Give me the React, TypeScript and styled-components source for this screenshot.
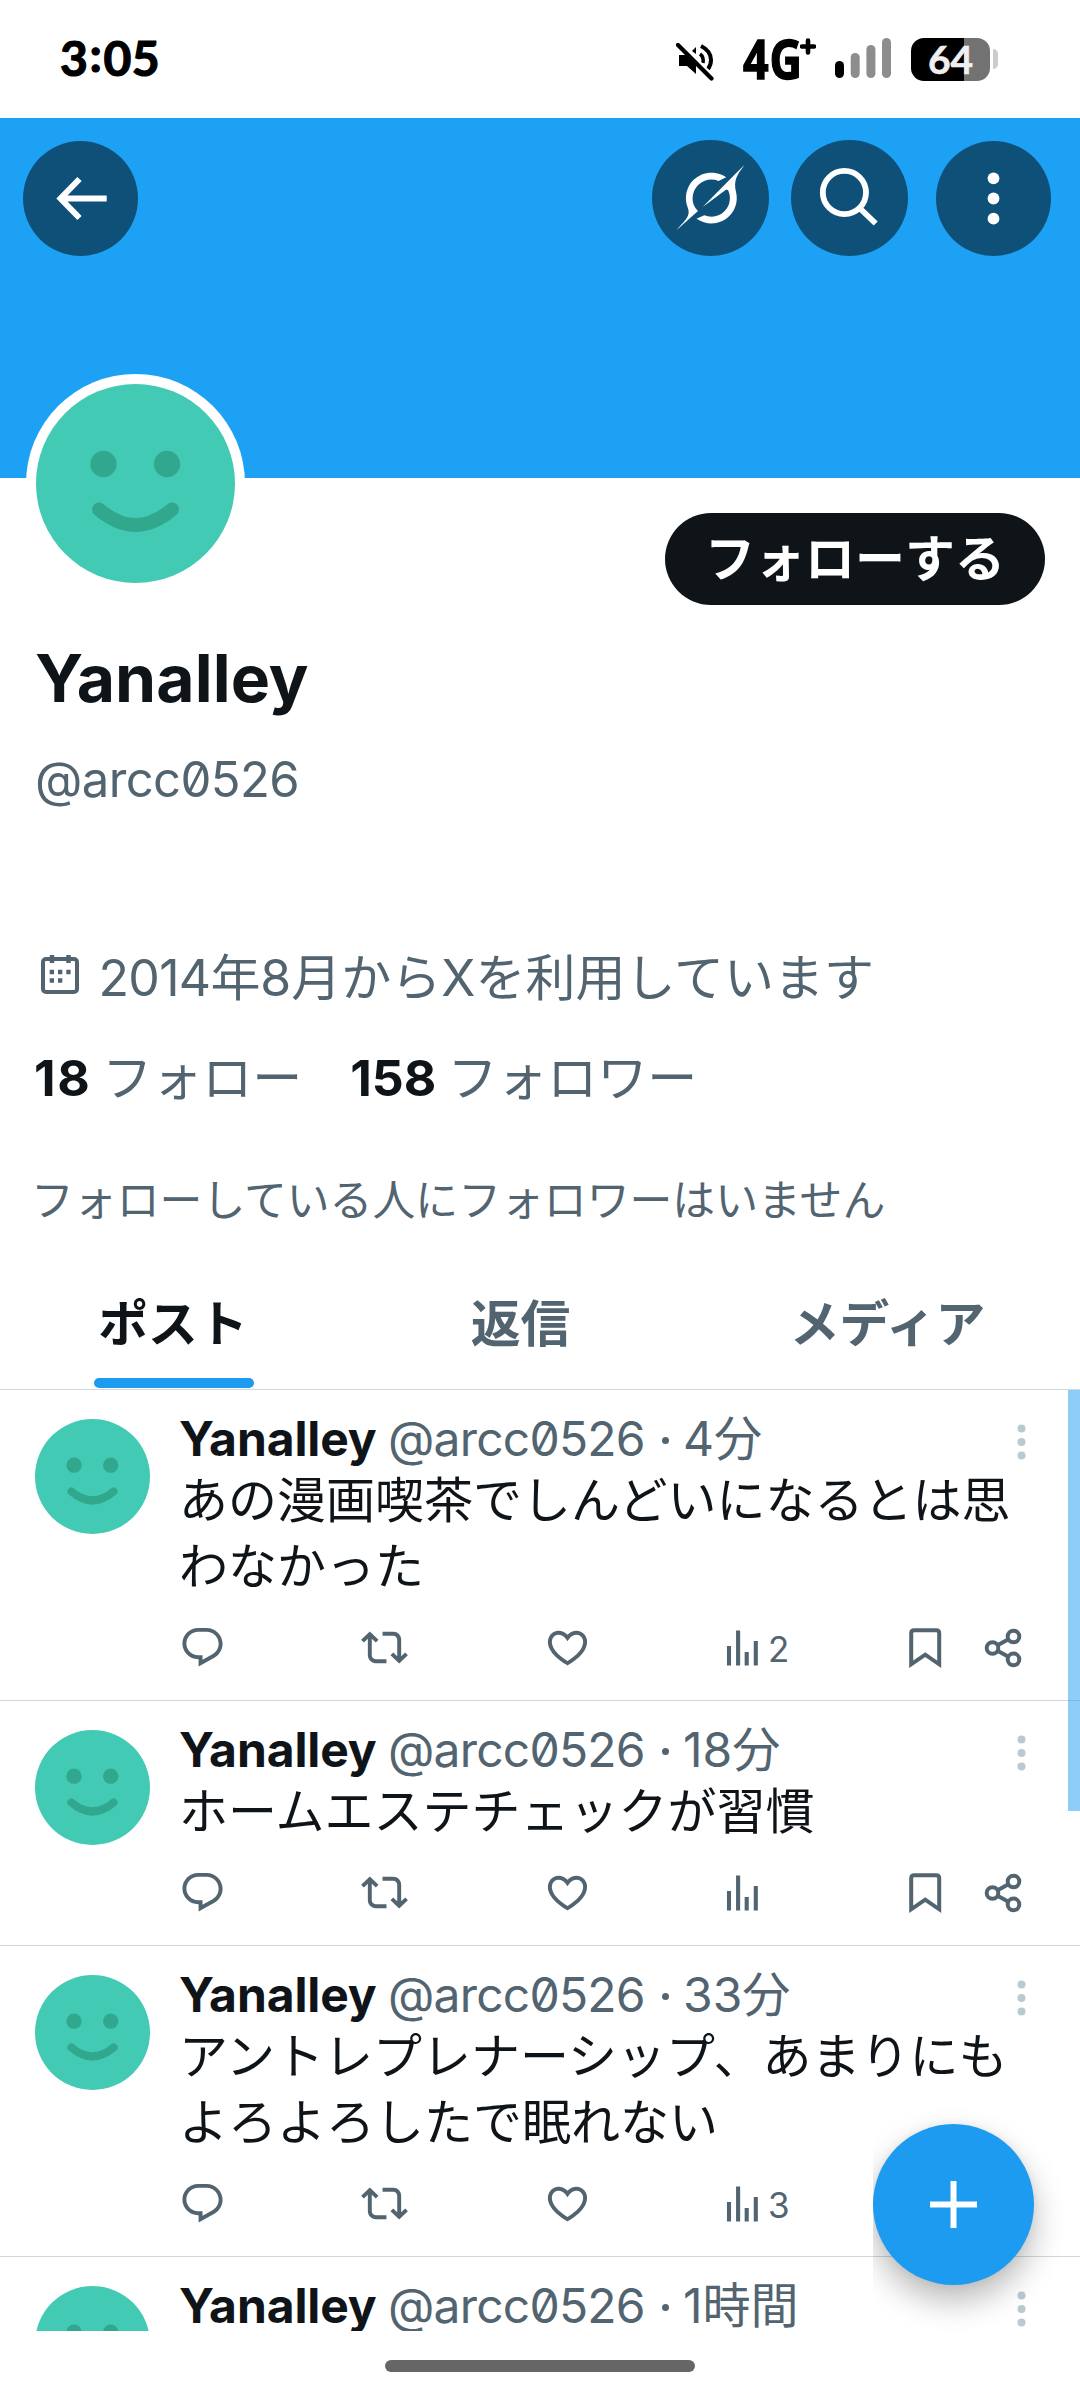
import React from "react";
import styled, { createGlobalStyle } from "styled-components";

const ink = "#0f1419";
const slate = "#536471";
const blue = "#1d9bf0";
const line = "#cfd9de";

const GlobalStyle = createGlobalStyle`
  * { box-sizing: border-box; }
  body {
    margin: 0;
    background: #fff;
    color: ${ink};
    font-family: Inter, "Noto Sans CJK JP", sans-serif;
    font-size: 49px;
  }
`;

const Screen = styled.div`
  position: relative;
  width: 1080px;
  height: 2400px;
  display: flex;
  flex-direction: column;
  overflow: hidden;
  background: #fff;
  white-space: nowrap;
`;

/* Status bar */
const StatusBar = styled.header`
  flex: none;
  height: 118px;
  padding: 0 82px 2px 60px;
  display: flex;
  align-items: center;
  color: #000;
  font-family: Lato, sans-serif;
`;
const Clock = styled.div`
  flex: 1;
  display: flex;
  font-size: 48px;
  font-weight: 700;
  line-height: 60px;
  letter-spacing: 0.6px;
  -webkit-text-stroke: 1.2px #000;
`;
const Colon = styled.span`
  margin: -4px 1px 4px;
`;
const Network = styled.div`
  width: 75px;
  margin: 0 17px 0 29px;
  display: flex;
  align-items: center;
  font-family: "Open Sans", sans-serif;
  font-weight: 700;
  font-size: 54px;
  line-height: 60px;
`;
const Generation = styled.span`
  width: 57px;
  transform: scaleX(0.83);
  transform-origin: left;
  letter-spacing: 1px;
  -webkit-text-stroke: 1.4px #000;
`;
const Battery = styled.div`
  width: 79px;
  height: 43px;
  margin: 2px 3px 0 20px;
  border-radius: 13px;
  display: flex;
  align-items: center;
  justify-content: center;
  background: linear-gradient(to right, #000 53px, #727272 53px);
  color: #efefef;
  font-size: 39px;
  font-weight: 700;
  line-height: 43px;
  -webkit-text-stroke: 0.6px #efefef;
`;
const BatteryTip = styled.div`
  width: 5px;
  height: 20px;
  margin-top: 2px;
  border-radius: 0 6px 6px 0;
  background: #ccc;
`;

/* Banner */
const Banner = styled.div`
  flex: none;
  height: 360px;
  padding: 22px 29px 0 23px;
  display: flex;
  align-items: flex-start;
  background: #1da1f5;
`;
const RoundButton = styled.button<{ $size: number; $gap?: number }>`
  width: ${(p) => p.$size}px;
  height: ${(p) => (p.$size === 115 ? 115 : 116)}px;
  margin: ${(p) => (p.$size === 115 ? 1 : 0)}px 0 0 ${(p) => p.$gap ?? 0}px;
  padding: 0;
  border: 0;
  border-radius: 50%;
  background: #0f5079;
  svg { display: block; }
`;
const Spacer = styled.div`
  flex: 1;
`;

/* Profile */
const ProfileTop = styled.div`
  flex: none;
  height: 150px;
  padding: 35px 35px 0 26px;
  display: flex;
  justify-content: space-between;
  align-items: flex-start;
`;
const AvatarRing = styled.div`
  width: 219px;
  height: 219px;
  margin-top: -139px;
  padding: 10px;
  border-radius: 50%;
  background: #fff;
`;
const FollowButton = styled.button`
  width: 380px;
  height: 92px;
  padding: 0;
  border: 0;
  border-radius: 46px;
  background: ${ink};
  color: #fff;
  font: 700 50px/92px Inter, "Noto Sans CJK JP", sans-serif;
`;
const DisplayName = styled.h1`
  flex: none;
  height: 100px;
  margin: 0;
  padding-left: 35px;
  font-size: 66px;
  font-weight: 700;
  line-height: 101px;
  letter-spacing: 0.1px;
`;
const Handle = styled.div`
  flex: none;
  height: 200px;
  padding-left: 35px;
  color: ${slate};
  font-size: 49px;
  line-height: 103px;
  letter-spacing: -0.6px;
  font-feature-settings: "zero";
`;
const Joined = styled.div`
  flex: none;
  height: 100px;
  padding-left: 37px;
  display: flex;
  align-items: center;
  color: ${slate};
  font-size: 50px;
  line-height: 100px;
  svg { margin: -8px 13.5px 0 0; }
`;
const Year = styled.span`
  letter-spacing: -0.7px;
`;
const Counts = styled.div`
  flex: none;
  height: 100px;
  padding-left: 34px;
  display: flex;
  gap: 48px;
  color: ${slate};
  font-size: 50px;
  line-height: 100px;
`;
const Count = styled.div<{ $tracking: number }>`
  display: flex;
  gap: 11px;
  b {
    color: ${ink};
    font-weight: 700;
    letter-spacing: ${(p) => p.$tracking}px;
  }
`;
const Mutuals = styled.div`
  flex: none;
  height: 96px;
  margin-top: 32px;
  padding-left: 31px;
  color: ${slate};
  font-size: 42.85px;
  line-height: 81px;
`;

/* Tabs */
const Tabs = styled.nav`
  flex: none;
  height: 134px;
  display: grid;
  grid-template-columns: 346px 349px 385px;
  border-bottom: 1px solid ${line};
`;
const Tab = styled.div<{ $active?: boolean }>`
  position: relative;
  height: 133px;
  text-align: center;
  font-size: 49.8px;
  font-weight: 700;
  line-height: 137px;
  color: ${(p) => (p.$active ? ink : slate)};
  &::after {
    content: "";
    display: ${(p) => (p.$active ? "block" : "none")};
    position: absolute;
    left: 94px;
    bottom: 1px;
    width: 160px;
    height: 10px;
    border-radius: 5px;
    background: ${blue};
  }
`;

/* Feed */
const Feed = styled.main`
  position: relative;
  flex: none;
  height: 941px;
  overflow: hidden;
`;
const ScrollThumb = styled.div`
  position: absolute;
  top: 0;
  right: 0;
  width: 12px;
  height: 421px;
  background: rgba(29, 155, 240, 0.5);
`;
const PostRow = styled.article`
  display: flex;
  padding: 20px 0 28px 35px;
  border-bottom: 1px solid ${line};
`;
const PostAvatar = styled.div`
  flex: none;
  width: 115px;
  height: 115px;
  margin: 9px 29px 0 0;
`;
const PostMain = styled.div`
  flex: 1;
  min-width: 0;
`;
const PostHead = styled.div`
  display: flex;
  height: 58px;
  padding-right: 54px;
  font-size: 48px;
  line-height: 57px;
  color: ${slate};
`;
const Author = styled.b`
  width: 209px;
  color: ${ink};
  font-weight: 700;
  letter-spacing: -0.1px;
`;
const PostHandle = styled.span`
  width: 269px;
  letter-spacing: -0.8px;
  font-feature-settings: "zero";
`;
const Dot = styled.span`
  width: 7px;
  height: 7px;
  margin: 27px 14px 0 5px;
  border-radius: 50%;
  background: ${slate};
`;
const When = styled.span`
  flex: 1;
`;
const Body = styled.p`
  margin: 0;
  font-size: 49px;
  line-height: 66px;
  white-space: pre-line;
`;
const Actions = styled.div`
  height: 72px;
  padding: 24px 0 0;
  display: grid;
  grid-template-columns: 182px 183px 181px 180px 76px 47px;
  color: ${slate};
  svg { display: block; flex: none; }
`;
const Action = styled.div`
  display: flex;
  font-size: 35px;
  line-height: 51px;
`;

const Fab = styled.button`
  position: absolute;
  left: 873px;
  top: 2124px;
  width: 161px;
  height: 161px;
  padding: 0;
  border: 0;
  border-radius: 50%;
  background: ${blue};
  box-shadow: 0 16px 32px rgba(0, 0, 0, 0.27), 0 0 10px rgba(0, 0, 0, 0.06);
  clip-path: inset(-60px -46px -46px 0);
  svg { display: block; }
`;
const NavBar = styled.footer`
  flex: 1;
  display: flex;
  justify-content: center;
  padding-top: 29px;
`;
const HomeIndicator = styled.div`
  width: 310px;
  height: 12px;
  border-radius: 6px;
  background: #666;
`;

const FaceSvg = styled.svg`
  display: block;
  width: 100%;
  height: 100%;
`;
const Face = () => (
  <FaceSvg viewBox="0 0 199 199">
    <circle cx="99.5" cy="99.5" r="99.5" fill="#43cab4" />
    <circle cx="67.5" cy="80" r="13.2" fill="#31a88e" />
    <circle cx="131" cy="80" r="13.2" fill="#31a88e" />
    <path d="M63 125.500Q99.500 156.500 136 125.500" fill="none" stroke="#31a88e" strokeWidth="14" strokeLinecap="round" />
  </FaceSvg>
);

const MuteSvg = styled.svg`
  margin-top: 8px;
`;
const MutedIcon = () => (
  <MuteSvg width="38" height="38" viewBox="0 0 38 38">
    <path d="M16 8l4-4v7z" fill="#000" />
    <path d="M24 11q4 3 3 9" fill="none" stroke="#000" strokeWidth="3.500" />
    <path d="M25 3q10 5 10 14 0 5-3 9" fill="none" stroke="#000" strokeWidth="4" />
    <path d="M4 0l34 34" stroke="#fff" strokeWidth="3" />
    <path d="M3 12h8v11H3zM10 12l10 10v9l-9-8z" fill="#000" />
    <path d="M2 2l33.500 33.500" stroke="#000" strokeWidth="4.200" strokeLinecap="round" />
  </MuteSvg>
);
const PlusSign = () => (
  <svg width="16" height="40" viewBox="0 0 16 40">
    <path d="M8 2.500v12M2 8.500h12" stroke="#000" strokeWidth="4.600" strokeLinecap="round" />
  </svg>
);
const SignalIcon = () => (
  <svg width="56" height="40" viewBox="0 0 56 40">
    <rect x="0" y="23" width="9" height="17" rx="4.500" fill="#000" />
    <rect x="15.700" y="15" width="9" height="25" rx="4.500" fill="#8d8d8d" />
    <rect x="31.400" y="7" width="9" height="33" rx="4.500" fill="#8d8d8d" />
    <rect x="47" y="0" width="9" height="40" rx="4.500" fill="#8d8d8d" />
  </svg>
);
const BackIcon = () => (
  <svg width="115" height="115" fill="none" stroke="#fff" strokeWidth="6">
    <path d="M36 57.500H83.700M56.500 38 37.500 57.500 56.500 77" />
  </svg>
);
const GrokIcon = () => (
  <svg width="117" height="116">
    <g transform="translate(24.400 25) scale(2.060 2.040)" fill="#fff">
      <path d="M12.745 20.540l10.970-8.190c.539-.4 1.307-.244 1.564.38 1.349 3.288.746 7.241-1.938 9.955-2.683 2.714-6.417 3.310-9.830 1.954l-3.728 1.745c5.347 3.697 11.840 2.782 15.898-1.324 3.219-3.255 4.216-7.692 3.284-11.693l.008.009c-1.351-5.878.332-8.227 3.782-13.031L33 0l-4.540 4.590v-.014L12.743 20.544m-2.263 1.987c-3.837-3.707-3.175-9.446.1-12.755 2.420-2.449 6.388-3.448 9.852-1.979l3.720-1.737c-.67-.49-1.530-1.017-2.515-1.387-4.455-1.854-9.789-.931-13.410 2.728-3.483 3.523-4.579 8.940-2.697 13.561 1.405 3.454-.899 5.898-3.220 8.364C1.490 30.200.666 31.074 0 32l10.478-9.466" />
    </g>
  </svg>
);
const SearchIcon = () => (
  <svg width="117" height="116" fill="none" stroke="#fff" strokeWidth="5.800">
    <circle cx="53.400" cy="52.500" r="21.600" />
    <path d="M68.500 68 84.700 83.500" />
  </svg>
);
const MenuIcon = () => (
  <svg width="115" height="115" fill="#fff">
    <circle cx="57.500" cy="37.300" r="5.900" />
    <circle cx="57.500" cy="57.500" r="5.900" />
    <circle cx="57.500" cy="77.700" r="5.900" />
  </svg>
);
const CalendarIcon = () => (
  <svg width="48" height="42" fill="none" stroke={slate} strokeWidth="4">
    <rect x="6" y="6" width="34" height="33" rx="3" />
    <path d="M15 2v8M31.500 2v8" strokeWidth="4.500" />
    <path d="M12.700 19h4.300M21 19h4.300M29.300 19h4.300M12.700 27.500h4.300M21 27.500h4.300" strokeWidth="4.300" />
  </svg>
);
const ReplyIcon = () => (
  <svg width="47" height="47" viewBox="0 0 24 24" fill="currentColor">
    <path d="M1.751 10c0-4.420 3.584-8 8.005-8h4.366c4.490 0 8.129 3.640 8.129 8.130 0 2.960-1.607 5.680-4.196 7.110l-8.054 4.460v-3.690h-.067c-4.490.1-8.183-3.510-8.183-8.010zm8.005-6c-3.317 0-6.005 2.690-6.005 6 0 3.370 2.770 6.080 6.138 6.010l.351-.01h1.761v2.300l5.087-2.810c1.951-1.080 3.163-3.130 3.163-5.360 0-3.390-2.744-6.130-6.129-6.130H9.756z" />
  </svg>
);
const RepostIcon = () => (
  <svg width="47" height="47" viewBox="0 0 24 24" fill="currentColor">
    <path d="M4.500 3.880l4.432 4.140-1.364 1.460L5.500 7.550V16c0 1.100.896 2 2 2H13v2H7.500c-2.209 0-4-1.790-4-4V7.550L1.432 9.480.068 8.020 4.500 3.880zM16.500 6H11V4h5.500c2.209 0 4 1.790 4 4v8.450l2.068-1.930 1.364 1.460-4.432 4.140-4.432-4.140 1.364-1.460 2.068 1.930V8c0-1.100-.896-2-2-2z" />
  </svg>
);
const HeartIcon = () => (
  <svg width="47" height="47" viewBox="0 0 24 24" fill="currentColor">
    <path d="M16.697 5.500c-1.222-.06-2.679.51-3.890 2.160l-.805 1.090-.806-1.090C9.984 6.010 8.526 5.440 7.304 5.500c-1.243.07-2.349.78-2.910 1.910-.552 1.120-.633 2.780.479 4.820 1.074 1.970 3.257 4.270 7.129 6.610 3.870-2.340 6.052-4.640 7.126-6.610 1.111-2.040 1.030-3.700.477-4.820-.561-1.130-1.666-1.840-2.908-1.910zm4.187 7.690c-1.351 2.480-4.001 5.120-8.379 7.670l-.503.3-.504-.3c-4.379-2.550-7.029-5.190-8.382-7.670-1.360-2.500-1.410-4.860-.514-6.670.887-1.790 2.647-2.910 4.601-3.010 1.651-.09 3.368.56 4.798 2.010 1.429-1.450 3.146-2.100 4.796-2.010 1.954.1 3.714 1.220 4.601 3.010.896 1.810.846 4.170-.514 6.670z" />
  </svg>
);
const ViewsIcon = () => (
  <svg width="43" height="47" fill="none" stroke="currentColor" strokeWidth="4.100">
    <path d="M4 22v19.600M13.100 6.400v35.200M21.700 28v13.600M30.800 17v24.600" />
  </svg>
);
const BookmarkIcon = () => (
  <svg width="47" height="47" fill="none" stroke="currentColor" strokeWidth="4">
    <path d="M6.200 40.300V9.200Q6.200 6.200 9.200 6.200H31.200Q34.200 6.200 34.200 9.200V40.300L20.200 30.600Z" />
  </svg>
);
const ShareIcon = () => (
  <svg width="47" height="47" fill="none" stroke="currentColor" strokeWidth="4">
    <circle cx="11.500" cy="24" r="5.800" />
    <circle cx="32.500" cy="12.500" r="5.800" />
    <circle cx="32.500" cy="35.400" r="5.800" />
    <path d="M16.500 21.300 27.500 15.200M16.500 26.700 27.500 32.700" />
  </svg>
);
const PostMenuIcon = () => (
  <svg width="9" height="57" fill="#b9cad3">
    <circle cx="4.500" cy="18.500" r="4" />
    <circle cx="4.500" cy="32" r="4" />
    <circle cx="4.500" cy="45.500" r="4" />
  </svg>
);

interface PostData {
  time: string;
  text: string;
  views?: string;
}
const posts: PostData[] = [
  { time: "4分", text: "あの漫画喫茶でしんどいになるとは思\nわなかった", views: "2" },
  { time: "18分", text: "ホームエステチェックが習慣" },
  { time: "33分", text: "アントレプレナーシップ、あまりにも\nよろよろしたで眠れない", views: "3" },
  { time: "1時間", text: "" },
];

const Post = ({ time, text, views }: PostData) => (
  <PostRow>
    <PostAvatar><Face /></PostAvatar>
    <PostMain>
      <PostHead>
        <Author>Yanalley</Author>
        <PostHandle>@arcc0526</PostHandle>
        <Dot />
        <When>{time}</When>
        <PostMenuIcon />
      </PostHead>
      <Body>{text}</Body>
      <Actions>
        <Action><ReplyIcon /></Action>
        <Action><RepostIcon /></Action>
        <Action><HeartIcon /></Action>
        <Action><ViewsIcon />{views}</Action>
        <Action><BookmarkIcon /></Action>
        <Action><ShareIcon /></Action>
      </Actions>
    </PostMain>
  </PostRow>
);

export default function App() {
  return (
    <Screen lang="ja">
      <GlobalStyle />
      <StatusBar>
        <Clock>3<Colon>:</Colon>05</Clock>
        <MutedIcon />
        <Network><Generation>4G</Generation><PlusSign /></Network>
        <SignalIcon />
        <Battery>64</Battery>
        <BatteryTip />
      </StatusBar>
      <Banner>
        <RoundButton $size={115}><BackIcon /></RoundButton>
        <Spacer />
        <RoundButton $size={117}><GrokIcon /></RoundButton>
        <RoundButton $size={117} $gap={22}><SearchIcon /></RoundButton>
        <RoundButton $size={115} $gap={28}><MenuIcon /></RoundButton>
      </Banner>
      <ProfileTop>
        <AvatarRing><Face /></AvatarRing>
        <FollowButton>フォローする</FollowButton>
      </ProfileTop>
      <DisplayName>Yanalley</DisplayName>
      <Handle>@arcc0526</Handle>
      <Joined><CalendarIcon /><Year>2014</Year>年8月からXを利用しています</Joined>
      <Counts>
        <Count $tracking={1.6}><b>18</b>フォロー</Count>
        <Count $tracking={0}><b>158</b>フォロワー</Count>
      </Counts>
      <Mutuals>フォローしている人にフォロワーはいません</Mutuals>
      <Tabs>
        <Tab $active>ポスト</Tab>
        <Tab>返信</Tab>
        <Tab>メディア</Tab>
      </Tabs>
      <Feed>
        {posts.map((post) => <Post key={post.time} {...post} />)}
        <ScrollThumb />
      </Feed>
      <NavBar><HomeIndicator /></NavBar>
      <Fab>
        <svg width="161" height="161" stroke="#fff" strokeWidth="6">
          <path d="M80.500 57v47M57 80.500h47" />
        </svg>
      </Fab>
    </Screen>
  );
}
